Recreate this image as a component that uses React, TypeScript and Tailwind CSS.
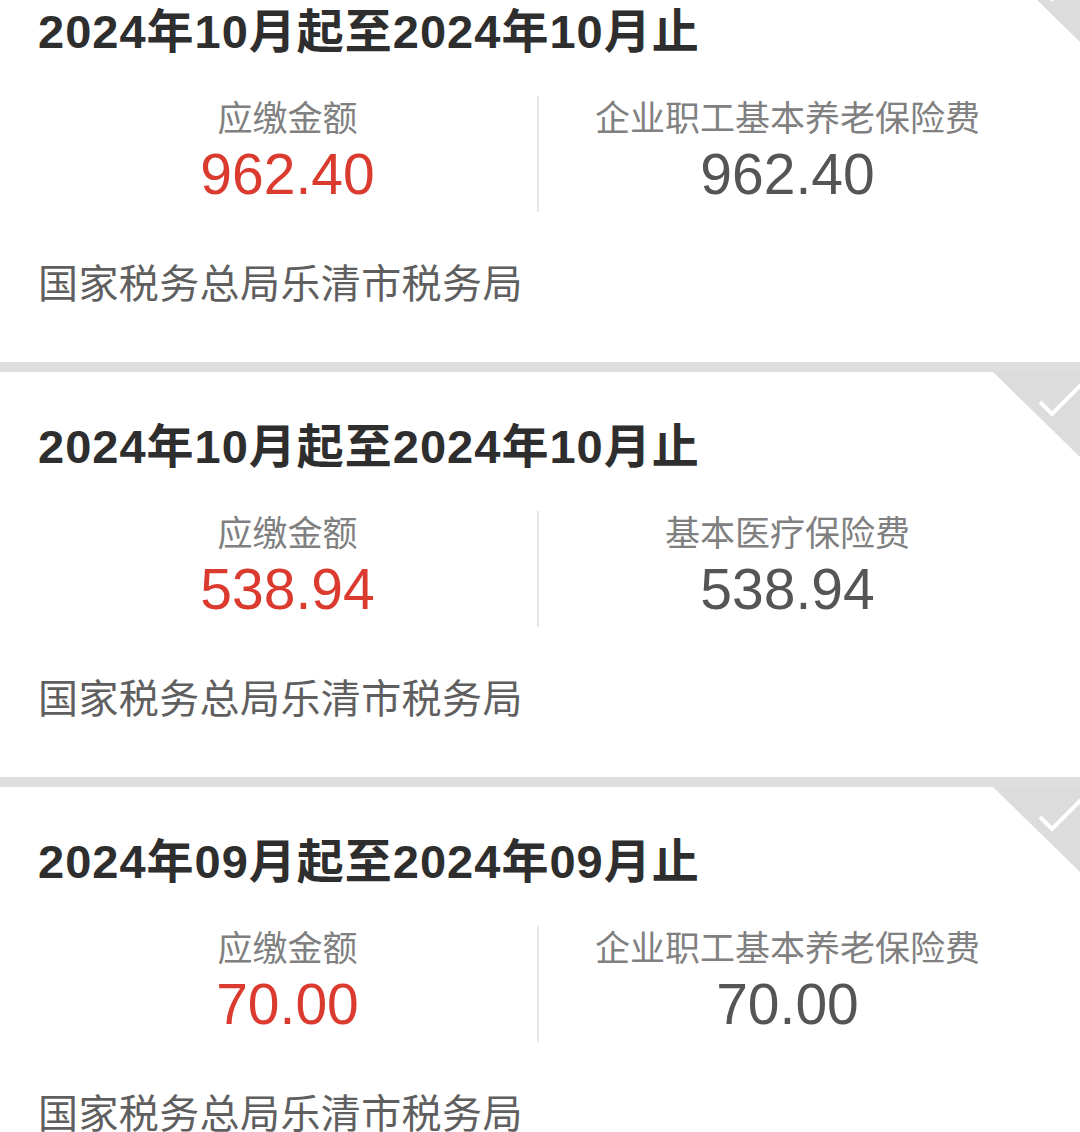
import React from 'react';

interface Record {
  period: string;
  amount: string;
  item: string;
}

const records: Record[] = [
  { period: '2024年10月起至2024年10月止', amount: '962.40', item: '企业职工基本养老保险费' },
  { period: '2024年10月起至2024年10月止', amount: '538.94', item: '基本医疗保险费' },
  { period: '2024年09月起至2024年09月止', amount: '70.00', item: '企业职工基本养老保险费' },
];

const font = { fontFamily: '"Liberation Sans", "Noto Sans CJK SC", sans-serif' };

function PaidCorner() {
  return (
    <svg className="absolute right-0 top-0" width="87" height="85" viewBox="0 0 87 85">
      <polygon points="0,0 87,0 87,85" fill="#dcdcdc" />
      <polyline points="47,30 59,42 88,13" fill="none" stroke="#ffffff" strokeWidth="4" />
    </svg>
  );
}

function RecordCard({ record }: { record: Record }) {
  return (
    <div>
      <div className="relative h-[405px] bg-white pl-[38px] pr-[44px]">
        <PaidCorner />
        <div className="pt-[47px] text-[47px] font-bold leading-[56px] tracking-[1px] text-[#2e2e2e]">
          {record.period}
        </div>

        <div className="mt-[36px] grid grid-cols-2">
          <div className="flex flex-col items-center">
            <div className="text-[35px] leading-[46px] text-[#808080]">应缴金额</div>
            <div className="text-[57px] leading-[64px] text-[#db3a2f]">{record.amount}</div>
          </div>
          <div className="flex h-[116px] flex-col items-center border-l-2 border-[#e6e6e6]">
            <div className="text-[35px] leading-[46px] text-[#808080]">{record.item}</div>
            <div className="text-[57px] leading-[64px] text-[#555555]">{record.amount}</div>
          </div>
        </div>

        <div className="mt-[48px] text-[40px] leading-[48px] tracking-[0.4px] text-[#5f5f5f]">
          国家税务总局乐清市税务局
        </div>
      </div>
      <div className="h-[10px] bg-[#dedede]" />
    </div>
  );
}

export default function App() {
  return (
    <div className="h-[1132px] w-[1080px] overflow-hidden bg-white" style={font}>
      <div className="-mt-[43px] flex flex-col">
        {records.map((r, i) => (
          <RecordCard key={i} record={r} />
        ))}
      </div>
    </div>
  );
}
